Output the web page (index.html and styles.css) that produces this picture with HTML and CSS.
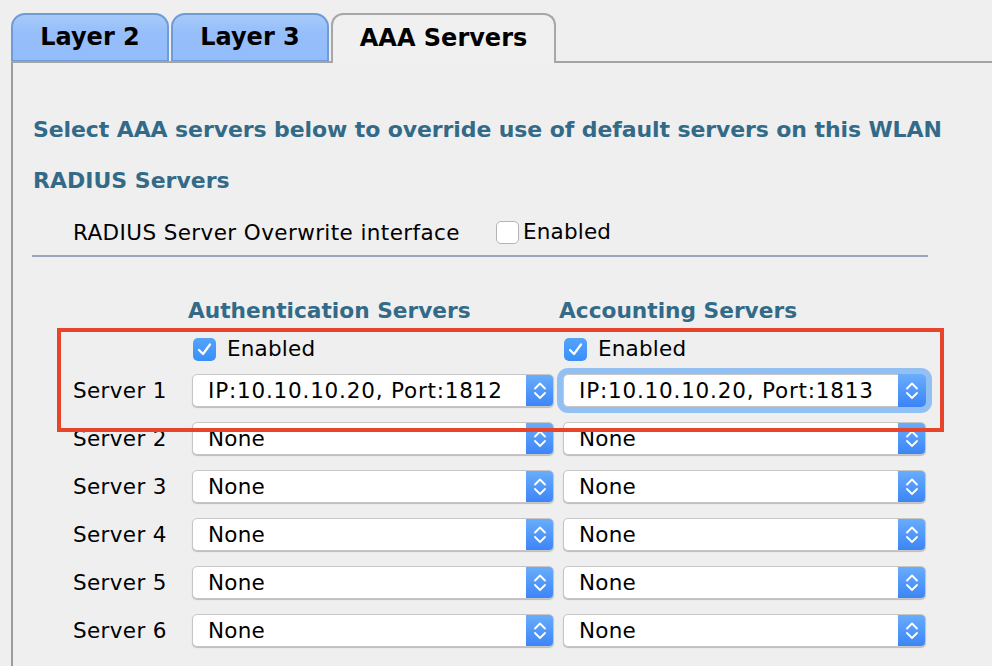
FILE: index.html
```html
<!DOCTYPE html>
<html>
<head>
<meta charset="utf-8">
<title>AAA Servers</title>
<link rel="stylesheet" href="styles.css">
</head>
<body>
<div class="page">
  <div class="tabs">
    <div class="tab">Layer 2</div>
    <div class="tab">Layer 3</div>
    <div class="tab active">AAA Servers</div>
  </div>
  <div class="panel">
    <h2 class="title">Select AAA servers below to override use of default servers on this WLAN</h2>
    <h3 class="subtitle">RADIUS Servers</h3>
    <div class="overwrite">
      <span>RADIUS Server Overwrite interface</span>
      <span class="chk"><span class="box"></span>Enabled</span>
    </div>
    <div class="rule"></div>

    <div class="servers">
      <div class="row head">
        <div class="lbl"></div>
        <div class="col colhead">Authentication Servers</div>
        <div class="col colhead">Accounting Servers</div>
      </div>
      <div class="row checks">
        <div class="lbl"></div>
        <div class="col"><span class="chk on"><span class="box"><svg viewBox="0 0 23 23" width="23" height="23"><path d="M6 12 L10 16 L17 6.5" fill="none" stroke="#fff" stroke-width="2.2" stroke-linecap="round" stroke-linejoin="round"/></svg></span>Enabled</span></div>
        <div class="col"><span class="chk on"><span class="box"><svg viewBox="0 0 23 23" width="23" height="23"><path d="M6 12 L10 16 L17 6.5" fill="none" stroke="#fff" stroke-width="2.2" stroke-linecap="round" stroke-linejoin="round"/></svg></span>Enabled</span></div>
      </div>

      <div class="row srv first">
        <div class="lbl">Server 1</div>
        <div class="col select"><span class="val ip">IP:10.10.10.20, Port:1812</span><span class="step"><svg viewBox="0 0 28 33" width="28" height="33"><path d="M9 14.5 L14 9.5 L19 14.5 M9 19 L14 24 L19 19" fill="none" stroke="#fff" stroke-width="1.8" stroke-linecap="round" stroke-linejoin="round"/></svg></span></div>
        <div class="col select focus"><span class="val ip">IP:10.10.10.20, Port:1813</span><span class="step"><svg viewBox="0 0 28 33" width="28" height="33"><path d="M9 14.5 L14 9.5 L19 14.5 M9 19 L14 24 L19 19" fill="none" stroke="#fff" stroke-width="1.8" stroke-linecap="round" stroke-linejoin="round"/></svg></span></div>
      </div>
      <div class="row srv">
        <div class="lbl">Server 2</div>
        <div class="col select"><span class="val">None</span><span class="step"><svg viewBox="0 0 28 33" width="28" height="33"><path d="M9 14.5 L14 9.5 L19 14.5 M9 19 L14 24 L19 19" fill="none" stroke="#fff" stroke-width="1.8" stroke-linecap="round" stroke-linejoin="round"/></svg></span></div>
        <div class="col select"><span class="val">None</span><span class="step"><svg viewBox="0 0 28 33" width="28" height="33"><path d="M9 14.5 L14 9.5 L19 14.5 M9 19 L14 24 L19 19" fill="none" stroke="#fff" stroke-width="1.8" stroke-linecap="round" stroke-linejoin="round"/></svg></span></div>
      </div>
      <div class="row srv">
        <div class="lbl">Server 3</div>
        <div class="col select"><span class="val">None</span><span class="step"><svg viewBox="0 0 28 33" width="28" height="33"><path d="M9 14.5 L14 9.5 L19 14.5 M9 19 L14 24 L19 19" fill="none" stroke="#fff" stroke-width="1.8" stroke-linecap="round" stroke-linejoin="round"/></svg></span></div>
        <div class="col select"><span class="val">None</span><span class="step"><svg viewBox="0 0 28 33" width="28" height="33"><path d="M9 14.5 L14 9.5 L19 14.5 M9 19 L14 24 L19 19" fill="none" stroke="#fff" stroke-width="1.8" stroke-linecap="round" stroke-linejoin="round"/></svg></span></div>
      </div>
      <div class="row srv">
        <div class="lbl">Server 4</div>
        <div class="col select"><span class="val">None</span><span class="step"><svg viewBox="0 0 28 33" width="28" height="33"><path d="M9 14.5 L14 9.5 L19 14.5 M9 19 L14 24 L19 19" fill="none" stroke="#fff" stroke-width="1.8" stroke-linecap="round" stroke-linejoin="round"/></svg></span></div>
        <div class="col select"><span class="val">None</span><span class="step"><svg viewBox="0 0 28 33" width="28" height="33"><path d="M9 14.5 L14 9.5 L19 14.5 M9 19 L14 24 L19 19" fill="none" stroke="#fff" stroke-width="1.8" stroke-linecap="round" stroke-linejoin="round"/></svg></span></div>
      </div>
      <div class="row srv">
        <div class="lbl">Server 5</div>
        <div class="col select"><span class="val">None</span><span class="step"><svg viewBox="0 0 28 33" width="28" height="33"><path d="M9 14.5 L14 9.5 L19 14.5 M9 19 L14 24 L19 19" fill="none" stroke="#fff" stroke-width="1.8" stroke-linecap="round" stroke-linejoin="round"/></svg></span></div>
        <div class="col select"><span class="val">None</span><span class="step"><svg viewBox="0 0 28 33" width="28" height="33"><path d="M9 14.5 L14 9.5 L19 14.5 M9 19 L14 24 L19 19" fill="none" stroke="#fff" stroke-width="1.8" stroke-linecap="round" stroke-linejoin="round"/></svg></span></div>
      </div>
      <div class="row srv">
        <div class="lbl">Server 6</div>
        <div class="col select"><span class="val">None</span><span class="step"><svg viewBox="0 0 28 33" width="28" height="33"><path d="M9 14.5 L14 9.5 L19 14.5 M9 19 L14 24 L19 19" fill="none" stroke="#fff" stroke-width="1.8" stroke-linecap="round" stroke-linejoin="round"/></svg></span></div>
        <div class="col select"><span class="val">None</span><span class="step"><svg viewBox="0 0 28 33" width="28" height="33"><path d="M9 14.5 L14 9.5 L19 14.5 M9 19 L14 24 L19 19" fill="none" stroke="#fff" stroke-width="1.8" stroke-linecap="round" stroke-linejoin="round"/></svg></span></div>
      </div>
    </div>
  </div>
  <div class="highlight"></div>
</div>
</body>
</html>
```

FILE: styles.css
```css
html, body {
  margin: 0;
  padding: 0;
  background: #efefef;
}
body {
  font-family: "DejaVu Sans", Verdana, sans-serif;
  color: #000;
  width: 992px;
  height: 666px;
  overflow: hidden;
}
.page {
  position: relative;
  padding: 13px 0 0 11px;
}
.tabs {
  display: flex;
  gap: 2px;
  height: 48px;
  border-bottom: 2px solid #a4a4a4;
}
.tab {
  box-sizing: border-box;
  width: 158px;
  height: 48px;
  display: flex;
  align-items: center;
  justify-content: center;
  font-weight: bold;
  font-size: 24px;
  color: #000;
  border: 2px solid #6f9bd7;
  border-bottom-width: 1px;
  border-radius: 14px 14px 0 0;
  background: linear-gradient(#a6caf9, #95befa 40%, #93bdfa);
  padding-bottom: 1px;
}
.tab.active {
  width: 225px;
  height: 50px;
  margin-bottom: -2px;
  background: #f0f0f0;
  border: 2px solid #a7a7a7;
  border-bottom: none;
  border-radius: 12px 12px 0 0;
  padding-bottom: 3px;
}
.panel {
  border-left: 2px solid #9c9c9c;
  padding: 55px 0 0 20px;
  min-height: 560px;
}
.title {
  margin: 0;
  font-size: 22px;
  line-height: 24px;
  letter-spacing: -0.1px;
  font-weight: bold;
  color: #336a88;
  white-space: nowrap;
}
.subtitle {
  margin: 27px 0 0 0;
  font-size: 22px;
  line-height: 24px;
  font-weight: bold;
  color: #336a88;
}
.overwrite {
  margin: 27px 0 0 40px;
  display: flex;
  align-items: center;
  height: 24px;
  font-size: 21.5px;
  letter-spacing: 0.4px;
  gap: 36px;
}
.chk {
  display: inline-flex;
  align-items: center;
  gap: 4px;
  font-size: 21.5px;
  line-height: 24px;
  letter-spacing: 0.2px;
}
.box {
  box-sizing: border-box;
  width: 23px;
  height: 23px;
  border: 1px solid #b4b4b4;
  border-radius: 5px;
  background: #fff;
  display: inline-block;
}
.chk.on {
  gap: 11px;
  margin-left: 1px;
}
.chk.on .box {
  border: none;
  background: linear-gradient(#54a4fc, #3a8ef8);
}
.box svg { display: block; }
.rule {
  margin: 11px 0 0 -1px;
  width: 896px;
  height: 2px;
  background: #9ea3be;
}
.servers {
  margin: 42px 0 0 40px;
}
.row {
  display: flex;
  align-items: center;
  gap: 9px;
}
.lbl {
  width: 110px;
  flex: none;
  font-size: 21.5px;
  letter-spacing: 0.35px;
}
.col {
  width: 362px;
  flex: none;
}
.col + .col { width: 363px; }
.head { height: 24px; }
.colhead {
  font-size: 21.7px;
  line-height: 24px;
  font-weight: bold;
  color: #336a88;
  margin-left: -4px;
  margin-right: 4px;
  white-space: nowrap;
}
.checks {
  margin-top: 16px;
  height: 24px;
}
.srv {
  margin-top: 15px;
  height: 33px;
}
.srv.first { margin-top: 11px; }
.select {
  box-sizing: border-box;
  height: 33px;
  display: flex;
  align-items: center;
  background: #fff;
  border: 1px solid #c6c6c6;
  border-radius: 5px;
  box-shadow: 0 1px 1px rgba(0,0,0,0.22);
  overflow: hidden;
  font-size: 21.5px;
}
.select .val {
  flex: 1;
  padding-left: 15px;
  white-space: nowrap;
  letter-spacing: 0.2px;
}
.select .val.ip {
  letter-spacing: 0.8px;
}
.select .step {
  width: 28px;
  height: 33px;
  margin: -1px -1px -1px 0;
  background: linear-gradient(#6aaefc, #3a84f7);
  border-radius: 0 5px 5px 0;
}
.step svg { display: block; }
.select.focus {
  overflow: visible;
  box-shadow: 0 0 0 6px #93c0f3, 0 1px 1px rgba(0,0,0,0.22);
}
.highlight {
  position: absolute;
  left: 57px;
  top: 328px;
  width: 887px;
  height: 104px;
  box-sizing: border-box;
  border: 4px solid #e8442c;
  pointer-events: none;
}
```
